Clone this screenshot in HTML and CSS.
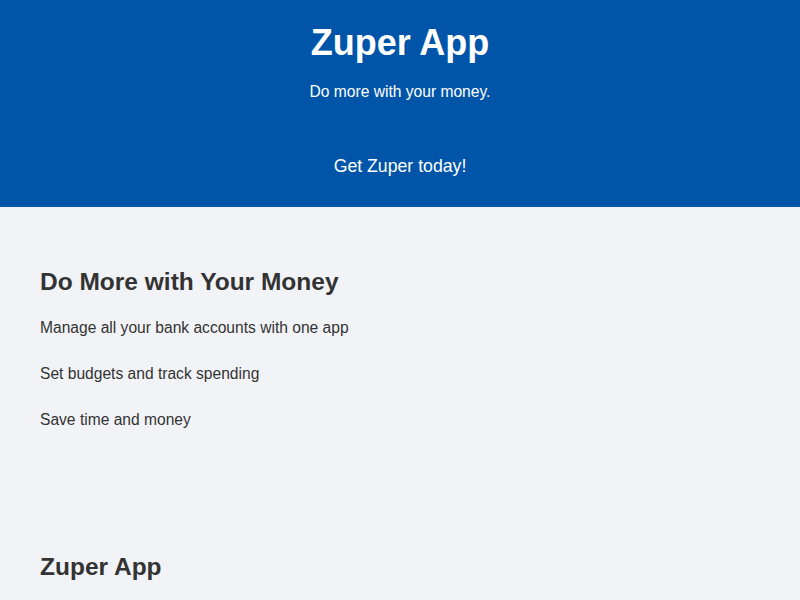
FILE: index.html
```html
<html>
    <head>
        <link rel="stylesheet" href="styles.css">
    </head>
    <body>
        <header class="hero">
            <h1 class="hero-title">Zuper App</h1>
            <p class="hero-tagline">Do more with your money.</p>
            <a class="hero-cta" href="#">Get Zuper today!</a>
        </header>
        <section class="features">
            <h2 class="section-title">Do More with Your Money</h2>
            <ul class="feature-list">
                <li>Manage all your bank accounts with one app</li>
                <li>Set budgets and track spending</li>
                <li>Save time and money</li>
            </ul>
        </section>
        <section class="about">
            <h2 class="section-title">Zuper App</h2>
        </section>
    </body>
</html>
```

FILE: styles.css
```css
body {
    margin: 0;
    font-family: 'Liberation Sans', Arial, sans-serif;
    background-color: #f2f3f7;
    color: #333333;
}
.hero {
    background-color: #0055a8;
    color: #ffffff;
    text-align: center;
    padding: 23px 20px 0;
    height: 184px;
}
.hero-title {
    margin: 0;
    font-size: 36px;
    line-height: 40px;
    font-weight: bold;
}
.hero-tagline {
    margin: 20px 0 0;
    font-size: 15.6px;
    line-height: 18px;
}
.hero-cta {
    display: inline-block;
    margin-top: 54px;
    font-size: 17.7px;
    line-height: 22px;
    color: #ffffff;
    text-decoration: none;
}
.features {
    padding: 61px 40px 0;
}
.section-title {
    margin: 0;
    font-size: 24.5px;
    line-height: 28px;
    font-weight: bold;
}
.feature-list {
    list-style: none;
    margin: 23px 0 0;
    padding: 0;
    display: flex;
    flex-direction: column;
    gap: 28px;
    font-size: 15.6px;
    line-height: 18px;
}
.about {
    padding: 124px 40px 40px;
}
```
